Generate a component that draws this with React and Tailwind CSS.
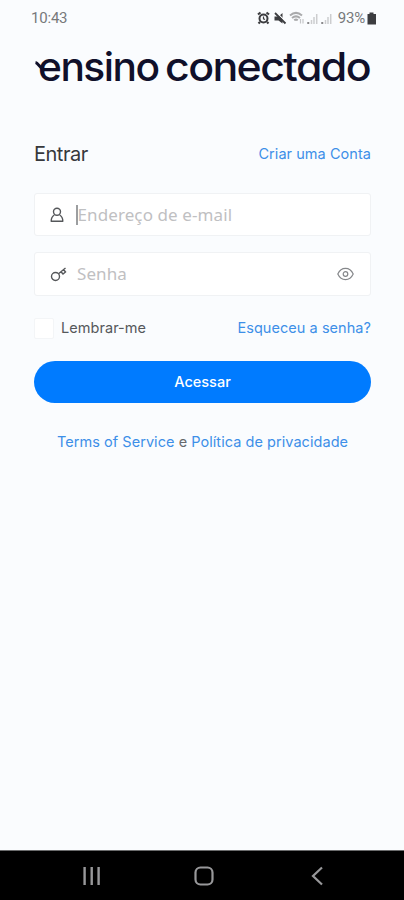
import React, { useState } from 'react';

function StatusBar() {
  return (
    <div className="flex h-9 items-center justify-between pl-[31px] pr-[28px] text-[#77797b]">
      <span className="font-[Roboto] text-[15px] leading-none tracking-[-0.2px]">10:43</span>
      <div className="flex items-center">
        {/* alarm */}
        <svg className="h-[14px] w-[14px]" viewBox="0 0 14 14" fill="none" stroke="#3c3d40">
          <circle cx="6.500" cy="7.500" r="4" strokeWidth="2" />
          <path d="M1 3.500l2.500-2M12 3.500L9.500 1.500M3 11l-1.500 1.500M10 11l1.500 1.500" strokeWidth="2.200" />
          <path d="M6.500 5.500v2.300l1.500.7" strokeWidth="1.200" />
        </svg>
        {/* muted sound */}
        <svg className="ml-[2px] h-[14px] w-[14px]" viewBox="0 0 14 14">
          <path d="M1.500 5.500h4L9.500 2v10.500L5.500 9.500h-4z" fill="#3c3d40" />
          <path d="M3.500 1.500l9 9" stroke="#fbfcfe" strokeWidth="1.200" />
          <path d="M2 2l10.500 10.500" stroke="#3c3d40" strokeWidth="1.800" />
        </svg>
        {/* wifi */}
        <svg className="ml-[2px] h-[14px] w-[16px]" viewBox="0 0 16 14" fill="none" stroke="#a9aaac" strokeWidth="2">
          <path d="M1 4.500c3.800-3.300 8.200-3.300 12 0M3 7c2.500-2 5.500-2 8 0M5.200 9.300c1.200-.9 2.400-.9 3.600 0" />
          <path d="M11.500 8v4.500M14 12.500V8" stroke="#c5c6c8" strokeWidth="1.200" />
        </svg>
        <Signal />
        <Signal />
        <span className="ml-[4px] font-[Roboto] text-[15px] leading-none tracking-[-0.2px]">93%</span>
        <svg className="ml-[2px] h-[13px] w-[9px]" viewBox="0 0 9 13" fill="#3c3d40">
          <path d="M2.500 .5h4V2H9v10.500H.5V2h2z" />
        </svg>
      </div>
    </div>
  );
}

function Signal() {
  return (
    <svg className="h-[13px] w-[14.500px]" viewBox="0 0 14 13" fill="#cccdcf">
      <path d="M2 10h2v2H2z" fill="#88898b" />
      <path d="M5.500 8h1.500v4H5.500zM8 5h1.500v7H8zM10.700 2h1.500v10h-1.500z" />
    </svg>
  );
}

function Logo() {
  return (
    <svg className="block h-[60px] w-full" viewBox="0 0 404 60" role="img" aria-label="ensino conectado">
      <g className="font-[Inter] text-[40px] font-medium tracking-[-1.500px] [font-feature-settings:'cv11']" fill="#10102a">
        <text x="38" y="44.500" textLength="120.500" lengthAdjust="spacingAndGlyphs">ensino</text>
        <text x="165" y="44.500" textLength="205" lengthAdjust="spacingAndGlyphs">conectado</text>
      </g>
      {/* tail that runs into the bar of the first letter */}
      <path d="M35.500 26.500c3 .5 3 5 8.500 7" fill="none" stroke="#10102a" strokeWidth="3" />
    </svg>
  );
}

export default function App() {
  const [showPassword, setShowPassword] = useState(false);
  const [remember, setRemember] = useState(false);

  return (
    <div className="flex h-[900px] w-[404px] flex-col overflow-hidden bg-[#fafcfe] font-[Inter,sans-serif]">
      <StatusBar />
      <Logo />

      <form className="flex flex-1 flex-col pl-[34px] pr-[33px] pt-[44px]" onSubmit={(e) => e.preventDefault()}>
        <div className="flex h-7 items-center justify-between">
          <h1 className="text-[20px] font-normal tracking-[-0.5px] text-[#36383b]">Entrar</h1>
          <a href="#" className="text-[14.500px] tracking-[0.050px] text-[#3d8fe8]">Criar uma Conta</a>
        </div>

        <div className="mt-[25px] flex h-[43px] items-center rounded-[3px] border border-[#f0f2f4] bg-white pl-[15px]">
          <svg className="h-4 w-[14px]" viewBox="0 0 14 16" fill="none" stroke="#55575a" strokeWidth="1.400">
            <circle cx="7" cy="4.800" r="3.500" />
            <path d="M4.300 8C2.200 9.200 1.200 11 1.200 14.300h11.600C12.800 11 11.800 9.200 9.700 8" strokeLinejoin="round" />
          </svg>
          <span className="ml-[12px] h-5 w-[1.500px] bg-[#9c9ea0]" />
          <span className="font-['Noto_Sans'] text-[17px] leading-5 tracking-[0.1px] text-[#bfc0c2]">Endereço de e-mail</span>
        </div>

        <div className="mt-4 flex h-[44px] items-center rounded-[3px] border border-[#f0f2f4] bg-white pl-[15px] pr-4">
          <svg className="h-4 w-[18px]" viewBox="0 0 18 16" fill="none" stroke="#55575a" strokeWidth="1.400">
            <circle cx="5.500" cy="10.500" r="4" />
            <path d="M8.500 7.700L15.500 2M11 5.700l2 2.300 2.500-2-1.800-2.200" />
          </svg>
          <span className="ml-[9px] flex-1 font-['Noto_Sans'] text-[17px] leading-5 tracking-[0.1px] text-[#bfc0c2]">Senha</span>
          <button type="button" onClick={() => setShowPassword(!showPassword)}>
            <svg className="h-[14px] w-[17px]" viewBox="0 0 17 14" fill="none" stroke="#85878a" strokeWidth="1.200">
              <path d="M.8 7C4.300-.5 12.700-.5 16.200 7 12.700 14.500 4.300 14.500.8 7z" />
              <circle cx="8.500" cy="7" r="2.300" />
            </svg>
          </button>
        </div>

        <div className="mt-[21px] flex h-[22px] items-center justify-between">
          <div className="flex items-center" onClick={() => setRemember(!remember)}>
            <span className="h-[21px] w-5 rounded-[2px] border border-[#f3f5f7] bg-white" />
            <span className="ml-[7px] text-[14.500px] tracking-[0.050px] text-[#55585b]">Lembrar-me</span>
          </div>
          <a href="#" className="text-[14.500px] tracking-[0.050px] text-[#3d8fe8]">Esqueceu a senha?</a>
        </div>

        <button type="submit" className="mt-[22px] h-[42px] rounded-full bg-[#007bff] text-[14.500px] font-medium text-white">
          Acessar
        </button>

        <p className="mt-[28px] text-center text-[14.500px] tracking-[0.050px] text-[#66696c]">
          <a href="#" className="text-[#3d8fe8]">Terms of Service</a> e <a href="#" className="text-[#3d8fe8]">Política de privacidade</a>
        </p>
      </form>

      <nav className="grid h-[50px] grid-cols-[68px_113px_45px_113px_65px] items-center border-t border-[#6b6c6d] bg-black">
        <svg className="col-start-2 ml-[14px] h-5 w-5" viewBox="0 0 20 20" stroke="#98989a" strokeWidth="2.400">
          <path d="M2.600 1v18M9.700 1v18M16.600 1v18" />
        </svg>
        <svg className="col-start-3 ml-[13px] h-5 w-5" viewBox="0 0 20 20" fill="none" stroke="#98989a" strokeWidth="2.200">
          <rect x="1.500" y="1.500" width="17" height="17" rx="5" />
        </svg>
        <svg className="col-start-4 ml-[85px] h-5 w-3" viewBox="0 0 12 20" fill="none" stroke="#98989a" strokeWidth="2.200">
          <path d="M11 1.500L2 10l9 8.500" />
        </svg>
      </nav>
    </div>
  );
}
